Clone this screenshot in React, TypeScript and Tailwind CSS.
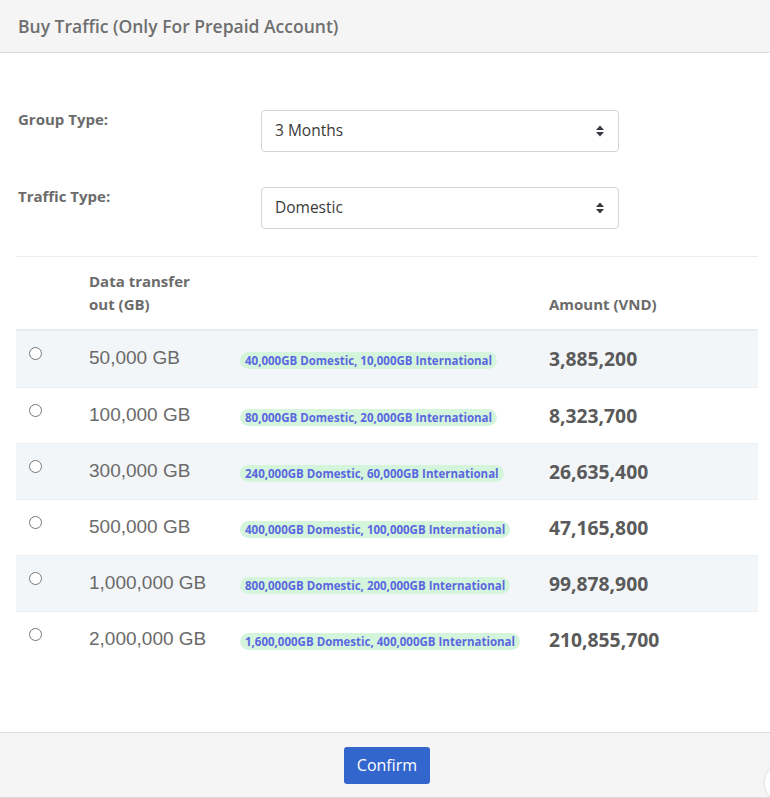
const rows = [
  { gb: '50,000 GB', note: '40,000GB Domestic, 10,000GB International', amount: '3,885,200' },
  { gb: '100,000 GB', note: '80,000GB Domestic, 20,000GB International', amount: '8,323,700' },
  { gb: '300,000 GB', note: '240,000GB Domestic, 60,000GB International', amount: '26,635,400' },
  { gb: '500,000 GB', note: '400,000GB Domestic, 100,000GB International', amount: '47,165,800' },
  { gb: '1,000,000 GB', note: '800,000GB Domestic, 200,000GB International', amount: '99,878,900' },
  { gb: '2,000,000 GB', note: '1,600,000GB Domestic, 400,000GB International', amount: '210,855,700' },
];

function SelectArrows() {
  return (
    <svg width="10" height="12" viewBox="0 0 10 12" className="shrink-0">
      <path d="M5 0.5 L9 5 L1 5 Z" fill="#343a40" />
      <path d="M5 11.5 L9 7 L1 7 Z" fill="#343a40" />
    </svg>
  );
}

function FakeSelect({ value }: { value: string }) {
  return (
    <div className="flex h-[42px] w-[358px] items-center justify-between rounded-[4px] border border-[#d1d5db] bg-white pl-[13px] pr-[13px]">
      <span className="text-[15.5px] text-[#3a3a3a]">{value}</span>
      <SelectArrows />
    </div>
  );
}

export default function App() {
  return (
    <div className="relative flex h-[798px] w-[770px] flex-col overflow-hidden bg-white font-['Open_Sans',sans-serif]">
      {/* Header */}
      <div className="flex h-[53px] shrink-0 items-center border-b border-[#dcdcdc] bg-[#f5f5f5] px-[18px]">
        <h1 className="text-[17.5px] font-semibold text-[#6f6f6f]">Buy Traffic (Only For Prepaid Account)</h1>
      </div>

      {/* Body */}
      <div className="flex-1 pl-[16px] pr-[12px]">
        <div className="flex flex-col gap-[35px] pt-[57px] pl-[2px]">
          <div className="flex items-start">
            <label className="w-[243px] text-[15px] font-bold leading-[19px] text-[#6b6b6b]">Group Type:</label>
            <FakeSelect value="3 Months" />
          </div>
          <div className="flex items-start">
            <label className="w-[243px] text-[15px] font-bold leading-[19px] text-[#6b6b6b]">Traffic Type:</label>
            <FakeSelect value="Domestic" />
          </div>
        </div>

        {/* Table */}
        <div className="mt-[27px] border-t border-[#ececec]">
          <div className="grid h-[74px] grid-cols-[73px_151px_309px_1fr] items-end border-b-2 border-[#e9ecef] pb-[13px] text-[15px] font-bold leading-[23px] text-[#6b6b6b]">
            <div />
            <div>
              Data transfer
              <br />
              out (GB)
            </div>
            <div />
            <div>Amount (VND)</div>
          </div>
          {rows.map((r, i) => (
            <div
              key={r.gb}
              className={
                'grid h-[56px] grid-cols-[73px_151px_309px_1fr] items-start ' +
                (i > 0 ? 'border-t border-[#eceeef] ' : '') +
                (i % 2 === 0 ? 'bg-[#f3f6f9]' : 'bg-white')
              }
            >
              <div className="pl-[13px] pt-[16px]">
                <span className="block h-[13px] w-[13px] rounded-full border border-[#767676] bg-white" />
              </div>
              <div className="pt-[13px] font-['Liberation_Sans',Arial,sans-serif] text-[19px] leading-[28px] text-[#6a6a6a]">
                {r.gb}
              </div>
              <div className="pt-[16px]">
                <span className="inline-block rounded-full bg-[#d4f5dc] px-[5px] text-[11.5px] font-bold leading-[17px] text-[#5a67e0]">
                  {r.note}
                </span>
              </div>
              <div className="pt-[13px] text-[19.3px] font-bold leading-[30px] text-[#5a5a5a]">{r.amount}</div>
            </div>
          ))}
        </div>
      </div>

      {/* Footer */}
      <div className="flex h-[66px] shrink-0 items-center justify-center border-y border-[#dcdcdc] bg-[#f5f5f5]">
        <button className="ml-[4px] h-[37px] w-[86px] rounded-[3px] bg-[#3366cc] text-[16px] text-white">Confirm</button>
      </div>

      {/* floating widget peeking in */}
      <div className="absolute left-[765px] top-[763px] h-[40px] w-[40px] rounded-full bg-white shadow-[0_0_3px_rgba(0,0,0,0.15)]" />
    </div>
  );
}
